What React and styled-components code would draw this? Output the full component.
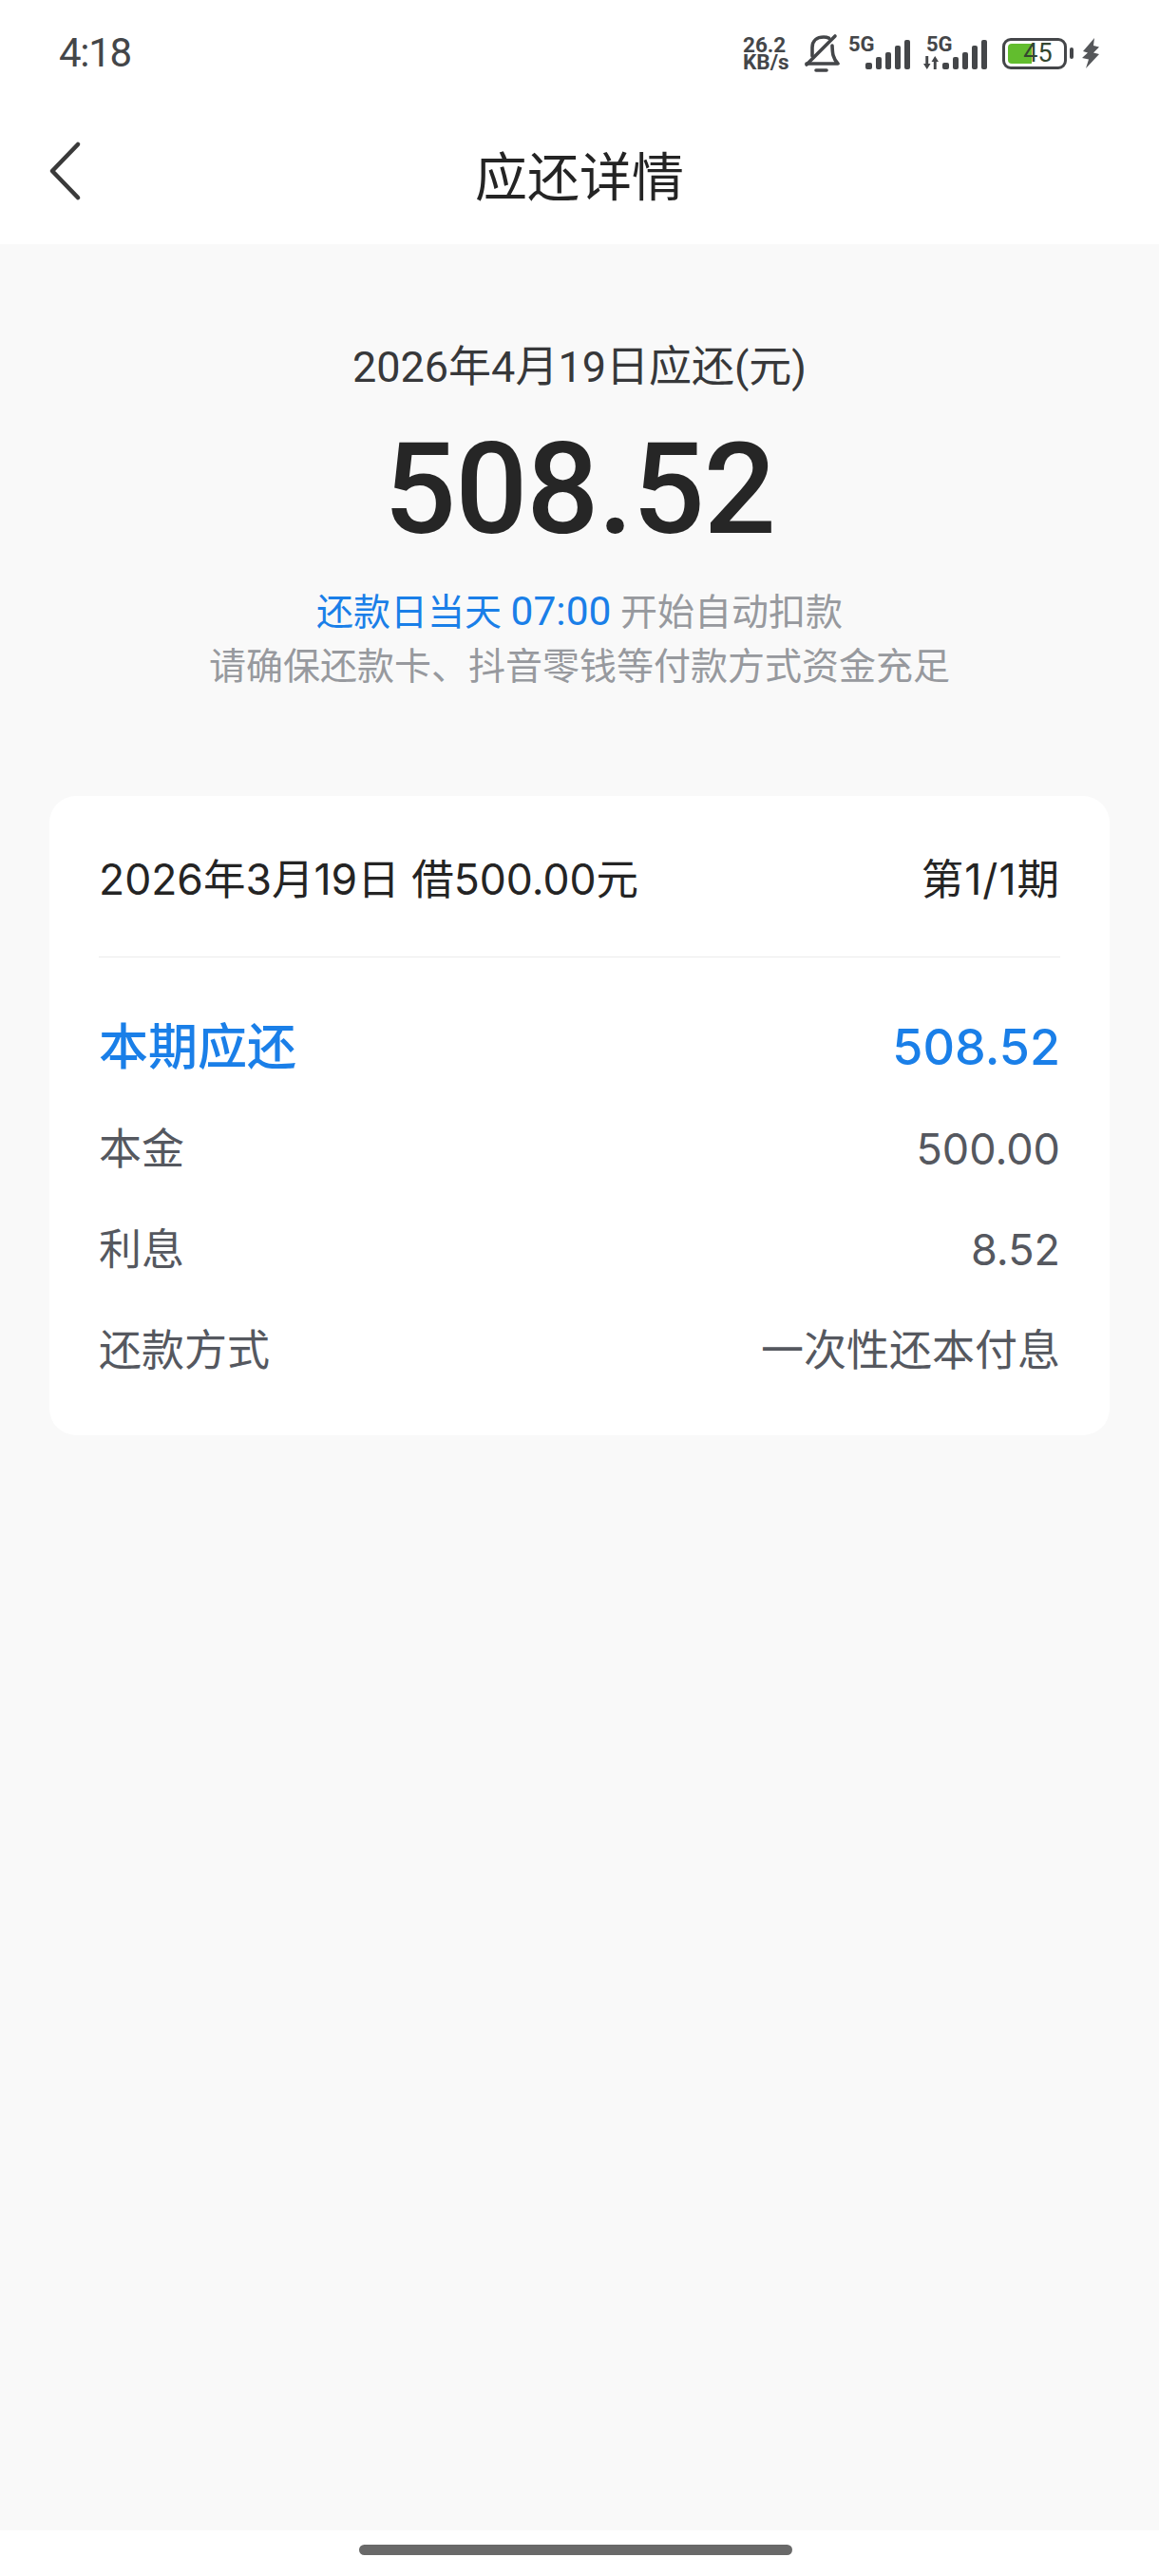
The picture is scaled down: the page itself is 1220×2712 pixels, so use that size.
import styled, { createGlobalStyle } from 'styled-components';

const GlobalStyle = createGlobalStyle`
	html, body {
		margin: 0;
		padding: 0;
		background: #ffffff;
	}
	* {
		box-sizing: border-box;
	}
`;

const CJK = '"Noto Sans CJK SC", sans-serif';

const Page = styled.div`
	width: 1220px;
	height: 2712px;
	display: flex;
	flex-direction: column;
	font-family: Roboto, ${CJK};
	background: #ffffff;
`;

const StatusBar = styled.div`
	height: 112px;
	padding: 0 63px 0 62px;
	display: flex;
	align-items: center;
	justify-content: space-between;
	color: #444649;
`;

const Clock = styled.span`
	font-size: 42px;
	letter-spacing: -1.3px;
	line-height: 1;
	font-weight: 400;
`;

const StatusIcons = styled.div`
	display: flex;
	align-items: center;
`;

const NetSpeed = styled.div`
	width: 52px;
	margin-right: 12px;
	display: flex;
	flex-direction: column;
	font-size: 22.5px;
	font-weight: 700;
	line-height: 18px;
	white-space: nowrap;
`;

const Network = styled.div`
	position: relative;
	width: ${(p) => p.$width}px;
	height: 34px;
	margin-left: ${(p) => p.$gap}px;
`;

const NetLabel = styled.span`
	position: absolute;
	top: -3px;
	left: ${(p) => p.$left}px;
	font-size: 22px;
	font-weight: 700;
	line-height: 22px;
`;

const SignalIcon = styled.svg`
	position: absolute;
	right: 0;
	bottom: 0;
	fill: #444649;
`;

const ArrowsIcon = styled.svg`
	position: absolute;
	left: 0;
	bottom: 0;
	fill: #444649;
`;

const Battery = styled.div`
	width: 68px;
	height: 33px;
	margin-left: 16px;
	padding: 3px;
	border: 3px solid #444649;
	border-radius: 9px;
	display: flex;
`;

const BatteryLevel = styled.div`
	width: 100%;
	height: 100%;
	border-radius: 4px;
	font-size: 27px;
	line-height: 21px;
	text-align: center;
	color: #34472f;
	padding-left: 7px;
`;

const BatteryNub = styled.div`
	width: 4px;
	height: 12px;
	margin-left: 3px;
	border-radius: 2px;
	background: #444649;
`;

const BoltIcon = styled.svg`
	margin-left: 9px;
	fill: #55575a;
`;

const Header = styled.header`
	position: relative;
	height: 145px;
	padding-bottom: 4px;
	display: flex;
	align-items: center;
	justify-content: center;
`;

const BackButton = styled.button`
	position: absolute;
	left: 48px;
	top: 36px;
	width: 42px;
	height: 64px;
	padding: 0;
	border: 0;
	background: none;
	color: #3a3a3a;
`;

const Title = styled.h1`
	margin: 0;
	font-family: ${CJK};
	font-size: 55px;
	font-weight: 400;
	line-height: 1;
	color: #242424;
`;

const Main = styled.main`
	flex: 1;
	background: #f9f9f9;
	padding: 0 52px;
`;

const Hero = styled.section`
	padding-top: 100px;
	text-align: center;
`;

const DueDate = styled.div`
	font-size: 45px;
	line-height: 60px;
	color: #37383a;
`;

const Amount = styled.div`
	margin-top: 24px;
	font-size: 134px;
	font-weight: 500;
	line-height: 150px;
	letter-spacing: -1px;
	color: #262626;
`;

const Notes = styled.div`
	margin-top: 24px;
	font-size: 39px;
	line-height: 57px;
	color: #97999e;
`;

const Accent = styled.span`
	color: #1a7fe8;
`;

const AccentTime = styled.span`
	font-size: 42.5px;
`;

const Card = styled.section`
	margin-top: 107px;
	height: 673px;
	padding: 0 52px;
	border-radius: 28px;
	background: #ffffff;
`;

const CardHead = styled.div`
	height: 170px;
	padding-top: 8px;
	display: flex;
	align-items: center;
	justify-content: space-between;
	border-bottom: 1px solid #ececec;
	font-family: Inter, ${CJK};
	font-size: 44.5px;
	line-height: 1;
	color: #242424;
`;

const Period = styled.span`
	letter-spacing: 1px;
`;

const Rows = styled.div`
	padding-top: 42px;
`;

const Row = styled.div`
	height: 106px;
	display: flex;
	align-items: center;
	justify-content: space-between;
	font-family: Inter, ${CJK};
	font-size: ${(p) => (p.$accent ? '52px' : '45px')};
	font-weight: ${(p) => (p.$accent ? 500 : 400)};
	line-height: 1;
	color: ${(p) => (p.$accent ? '#1a7fe8' : '#55585f')};
`;

const Footer = styled.footer`
	height: 48px;
	padding: 15px 8px 0 0;
	display: flex;
	justify-content: center;
	align-items: flex-start;
`;

const HomeBar = styled.div`
	width: 456px;
	height: 11px;
	border-radius: 6px;
	background: #696969;
`;

const SIGNAL_BARS = [
	{ x: 0, w: 7, h: 7 },
	{ x: 11, w: 6, h: 13 },
	{ x: 21, w: 6, h: 18 },
	{ x: 31, w: 6, h: 25 },
	{ x: 41, w: 6, h: 31 },
];

const Signal = () => (
	<SignalIcon width="47" height="31" viewBox="0 0 47 31">
		{SIGNAL_BARS.map((bar) => (
			<rect key={bar.x} x={bar.x} y={31 - bar.h} width={bar.w} height={bar.h} rx="2" />
		))}
	</SignalIcon>
);

const BellOff = () => (
	<svg width="38" height="42" viewBox="0 0 38 42" fill="none" stroke="#444649" strokeWidth="3.600" strokeLinecap="round" strokeLinejoin="round">
		<path d="M9 24v-9c0-7 5-11 12-11 2 0 4 .4 5.500 1.200" />
		<path d="M30 13c.3 8 .5 13 6 19H3" />
		<path d="M3 33 33 3" />
		<path d="M13 39h11" />
	</svg>
);

const Bolt = () => (
	<BoltIcon width="18" height="32" viewBox="0 0 18 32">
		<path d="M13 0 1 14l5 1.500L0 21l7 1.500L4 32l14-15-6-1.500 6-6-6-1.500z" />
	</BoltIcon>
);

const TransferArrows = () => (
	<ArrowsIcon width="16" height="14" viewBox="0 0 16 14">
		<path d="M0 8h2.300V0h2.900v8h2.300l-3.700 6zM8.500 6 12.200 0 16 6h-2.300v8h-2.900V6z" />
	</ArrowsIcon>
);

const repayment = {
	dueDate: '2026年4月19日应还(元)',
	amount: '508.52',
	loan: '2026年3月19日 借500.00元',
	period: '第1/1期',
	rows: [
		{ label: '本期应还', value: '508.52', accent: true },
		{ label: '本金', value: '500.00' },
		{ label: '利息', value: '8.52' },
		{ label: '还款方式', value: '一次性还本付息' },
	],
};

const batteryLevel = 45;

export default function App() {
	return (
		<Page>
			<GlobalStyle />
			<StatusBar>
				<Clock>4:18</Clock>
				<StatusIcons>
					<NetSpeed>
						<span>26.2</span>
						<span>KB/s</span>
					</NetSpeed>
					<BellOff />
					<Network $width={65} $gap={9}>
						<NetLabel $left={0}>5G</NetLabel>
						<Signal />
					</Network>
					<Network $width={67} $gap={14}>
						<NetLabel $left={3}>5G</NetLabel>
						<TransferArrows />
						<Signal />
					</Network>
					<Battery>
						<BatteryLevel
							style={{
								background: `linear-gradient(90deg, #62bd2e ${batteryLevel}%, transparent ${batteryLevel}%)`,
							}}
						>
							{batteryLevel}
						</BatteryLevel>
					</Battery>
					<BatteryNub />
					<Bolt />
				</StatusIcons>
			</StatusBar>
			<Header>
				<BackButton aria-label="返回">
					<svg width="42" height="64" viewBox="0 0 42 64" fill="none" stroke="currentColor" strokeWidth="4.600" strokeLinecap="round" strokeLinejoin="round">
						<path d="M34 4 7 32l27 28" />
					</svg>
				</BackButton>
				<Title>应还详情</Title>
			</Header>
			<Main>
				<Hero>
					<DueDate>{repayment.dueDate}</DueDate>
					<Amount>{repayment.amount}</Amount>
					<Notes>
						<div>
							<Accent>
								还款日当天 <AccentTime>07:00</AccentTime>
							</Accent>{' '}
							开始自动扣款
						</div>
						<div>请确保还款卡、抖音零钱等付款方式资金充足</div>
					</Notes>
				</Hero>
				<Card>
					<CardHead>
						<span>{repayment.loan}</span>
						<Period>{repayment.period}</Period>
					</CardHead>
					<Rows>
						{repayment.rows.map((row) => (
							<Row key={row.label} $accent={row.accent}>
								<span>{row.label}</span>
								<span>{row.value}</span>
							</Row>
						))}
					</Rows>
				</Card>
			</Main>
			<Footer>
				<HomeBar />
			</Footer>
		</Page>
	);
}
